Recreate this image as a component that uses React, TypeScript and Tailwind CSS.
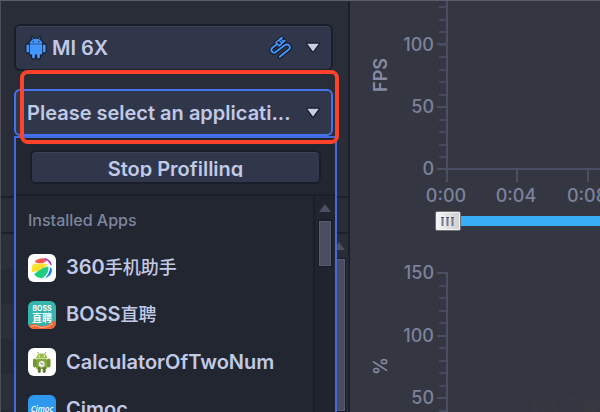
import React from "react"

type AppItem = {
  id: string
  label: React.ReactNode
  icon: React.ReactNode
}

const installedApps: AppItem[] = [
  {
    id: "360",
    label: <>360<span className="text-lg leading-6 font-medium">手机助手</span></>,
    icon: (
      <svg width="28" height="28" viewBox="0 0 28 28" aria-hidden="true">
        <rect width="28" height="28" rx="6" fill="#ffffff" />
        <path d="M6.500 8C8.500 5 12 4 15.500 4.300 18 4.600 18.800 6 18 7.500 15 10 10 9.500 6.500 8Z" fill="#fb5a50" />
        <path d="M16.500 3.900C20.500 4.600 23.300 7.400 24 11.500L22.300 10.800C21 8 19 6.200 17 5.600Z" fill="#a928d8" />
        <path d="M4 18C3 15 3.800 11.500 5.500 9.700 10 10 16 8.500 19.500 10.300 17 14.500 10 18.300 4 18Z" fill="#ffe231" />
        <path d="M6.200 20.200C9.500 17.500 14.500 13.300 20.300 12.500 21.500 17 17.500 23.600 13.500 24.200 10 24 7.500 22.500 6.200 20.200Z" fill="#1ece7e" />
        <path d="M22 13.500C24.800 14 24.300 18 22.500 20.600 20.800 22.900 18.700 24 16.800 24.400 19.800 21.500 21.800 18 22 13.500Z" fill="#1a82f5" />
      </svg>
    ),
  },
  {
    id: "boss",
    label: <>BOSS<span className="text-lg leading-6 font-medium">直聘</span></>,
    icon: (
      <svg width="28" height="28" viewBox="0 0 28 28" aria-hidden="true">
        <rect width="28" height="28" rx="6" fill="#35b5ad" />
        <path d="M1 24.500C5 22 8 23 11 24.500 16 26 22 24 25 20.500L28 19.500V22A6 6 0 0 1 22 28H6C3.500 28 2 26.500 1 24.500Z" fill="#f26435" />
        <path d="M3 25.500 8 24.500 13 26.500 20 25.500 25 22.500" stroke="#ffc2a0" strokeWidth="0.8" fill="none" />
        <text x="14" y="10" textAnchor="middle" fontFamily="Inter, sans-serif" fontWeight="700" fontSize="7" fill="#ffffff">BOSS</text>
        <text x="14" y="21" textAnchor="middle" fontFamily="'Noto Sans CJK SC', sans-serif" fontWeight="700" fontSize="10" fill="#ffffff">直聘</text>
      </svg>
    ),
  },
  {
    id: "calculator",
    label: "CalculatorOfTwoNum",
    icon: (
      <svg width="28" height="28" viewBox="0 0 28 28" aria-hidden="true">
        <rect width="28" height="28" rx="6" fill="#ffffff" />
        <path d="M9.500 4 11 6.500M18 4 16.500 6.500" stroke="#87a83d" strokeWidth="0.9" />
        <path d="M8 10.500C8.200 3.700 19.200 3.700 19.400 10.500Z" fill="#99bd49" />
        <rect x="8" y="11" width="11.400" height="10" rx="1.500" fill="#84a83b" />
        <rect x="5" y="10.500" width="3.500" height="9" rx="1.700" fill="#739532" />
        <rect x="19" y="10.500" width="3.500" height="9" rx="1.700" fill="#739532" />
        <rect x="9.800" y="19" width="3" height="6" rx="1.400" fill="#5e7a2b" />
        <rect x="14.700" y="19" width="3" height="6" rx="1.400" fill="#5e7a2b" />
        <circle cx="11.200" cy="8.300" r="0.700" fill="#ffffff" />
        <circle cx="16.300" cy="8.300" r="0.700" fill="#ffffff" />
        <circle cx="13.700" cy="16" r="3.500" fill="#f3f6e8" stroke="#789642" strokeWidth="0.7" />
        <path d="M12.500 14.500 13.700 16H15.500" stroke="#56702a" strokeWidth="0.8" fill="none" />
      </svg>
    ),
  },
  {
    id: "cimoc",
    label: "Cimoc",
    icon: (
      <svg width="28" height="28" viewBox="0 0 28 28" aria-hidden="true">
        <rect width="28" height="28" rx="6" fill="#2e98ee" />
        <text x="14" y="17" textAnchor="middle" fontFamily="'Open Sans', sans-serif" fontStyle="italic" fontSize="8" fill="#ffffff">Cimoc</text>
      </svg>
    ),
  },
]

const minorTicks = (count: number, top: number) =>
  Array.from({ length: count }, (_, i) => Math.round(top + i * 12.5))

function CaretDown() {
  return (
    <svg className="pointer-events-none absolute right-3 top-1/2 -translate-y-1/2" width="16" height="12" viewBox="0 0 16 12" aria-hidden="true">
      <path d="M2.200 1.800H13.800L8 9.500Z" fill="#c5cee9" stroke="#171b27" strokeWidth="2.400" strokeLinejoin="round" paintOrder="stroke" />
    </svg>
  )
}

function AndroidIcon() {
  const body =
    "M5.200 .8 6.900 3.500C4.200 4.700 3.700 6.500 3.700 7.700H16.300C16.300 6.500 15.800 4.700 13.100 3.500L14.800 .8 14.200 .5 12.400 3.200C11 2.700 9 2.700 7.600 3.200L5.800 .5Z" +
    "M3.700 8.200H16.300V17.300Q16.300 18.500 15.100 18.500H13.900V21.300Q13.700 22.600 12.500 22.600 11.300 22.600 11.100 21.300V18.500H8.900V21.300Q8.700 22.600 7.500 22.600 6.300 22.600 6.100 21.300V18.500H4.900Q3.700 18.500 3.700 17.300Z" +
    "M.4 9.700A1.300 1.300 0 0 1 3 9.700V15.200A1.300 1.300 0 0 1 .4 15.200ZM17 9.700A1.300 1.300 0 0 1 19.600 9.700V15.200A1.300 1.300 0 0 1 17 15.200Z"
  return (
    <svg className="pointer-events-none absolute left-3 top-1/2 -translate-y-1/2 overflow-visible" width="20" height="24" viewBox="0 0 20 24" aria-hidden="true">
      <path d={body} fill="#151a28" stroke="#151a28" strokeWidth="2.200" strokeLinejoin="round" />
      <path d={body} fill="#4496fb" />
      <circle cx="7.200" cy="5.700" r="0.600" fill="#151a28" />
      <circle cx="12.800" cy="5.700" r="0.600" fill="#151a28" />
    </svg>
  )
}

function CableIcon() {
  const cable = "M8 8.300 3.600 11.500C.6 14 3.600 18.300 6.800 16L15.600 9.300C19.200 6.800 22.800 11 19.800 13.600L10.800 20.800"
  return (
    <svg className="pointer-events-none absolute right-10 top-1/2 -translate-y-1/2" width="24" height="24" viewBox="0 0 24 24" fill="none" strokeLinecap="round" strokeLinejoin="round" aria-hidden="true">
      <path d={cable} stroke="#151a28" strokeWidth="4.200" />
      <path d="M6.500 6.300 12.600 1.300 16.400 4.600 11 10.200Z" fill="#151a28" stroke="#151a28" strokeWidth="2.400" />
      <path d={cable} stroke="#4496fb" strokeWidth="1.900" />
      <path d="M6.800 6.500 9.800 4 13 7.300 10.200 9.800Z" stroke="#4496fb" strokeWidth="1.600" />
      <path d="M11 3.300 12.800 1.900M14 6 15.700 4.600" stroke="#4496fb" strokeWidth="2" />
      <path d="M12.200 3.400 14 5.200" stroke="#4496fb" strokeWidth="1.200" />
    </svg>
  )
}

function ArrowUp() {
  return (
    <svg width="12" height="8" viewBox="0 0 12 8" aria-hidden="true">
      <path d="M6 0 12 8H0Z" fill="#4b4f63" />
    </svg>
  )
}

function AppMenu() {
  return (
    <div className="absolute -right-1 left-0 top-full z-10 flex h-[300px] flex-col border-2 border-[#406bdd] bg-[#222630]">
      <div className="h-[58px] shrink-0 border-b-2 border-[#1a1e29] px-3.5 pt-3">
        <button
          type="button"
          className="flex h-[34px] w-full items-center justify-center rounded-md border-2 border-[#1a1e2a] bg-[#31374a] shadow-[inset_0_1px_0_#3d4356]"
        >
          <span className="h-5 overflow-hidden text-xl leading-6 font-semibold text-[#c0c9e6]">Stop Profilling</span>
        </button>
      </div>
      <div className="flex min-h-0 flex-1">
        <div className="min-w-0 flex-1 overflow-hidden pl-3">
          <h2 className="flex h-12 items-center text-base text-[#7e859e]">Installed Apps</h2>
          <ul>
            {installedApps.map((app) => (
              <li key={app.id}>
                <button type="button" className="flex h-[47px] w-full items-center gap-2.5 text-left text-xl leading-6 font-semibold text-[#c0c9e6]">
                  {app.icon}
                  <span>{app.label}</span>
                </button>
              </li>
            ))}
          </ul>
        </div>
        <div className="flex w-[22px] flex-col items-center gap-2 border-l-2 border-[#1a1e29] bg-[#20242e] pt-2">
          <ArrowUp />
          <div className="h-[47px] w-3.5 border border-[#171b26] bg-[#4a4d61] shadow-[inset_0_0_0_1px_#5a5d70]" />
        </div>
      </div>
    </div>
  )
}

function Sidebar() {
  return (
    <aside className="relative flex w-[350px] shrink-0 flex-col border-l border-r-2 border-l-[#4b4e58] border-r-[#1c202b] bg-[#292d37]">
      <div className="flex h-[195px] shrink-0 flex-col gap-[18px] pl-[13px] pr-[15px] pt-[23px]">
        <div className="relative">
          <AndroidIcon />
          <select
            aria-label="Device"
            className="h-[47px] w-full appearance-none rounded-md border-2 border-[#1a1e2a] bg-[#31374a] pl-9 text-xl font-semibold text-[#c0c9e6] shadow-[inset_0_1px_0_#3d4356]"
          >
            <option>MI 6X</option>
          </select>
          <CableIcon />
          <CaretDown />
        </div>
        <div className="relative">
          <select
            aria-label="Application"
            className="h-[47px] w-full appearance-none rounded-md border-2 border-[#4472ee] bg-[#31374a] pl-[11px] text-xl font-semibold text-[#c0c9e6]"
          >
            <option>Please select an applicati...</option>
          </select>
          <CaretDown />
          <AppMenu />
          {/* Highlight around the application picker */}
          <div className="pointer-events-none absolute -bottom-2 -right-1.5 -top-[19px] left-1.5 z-20 rounded-lg border-4 border-[#ff432b]" />
        </div>
      </div>

      {/* Table that the open menu covers */}
      <div className="flex min-h-0 flex-1 flex-col overflow-hidden">
        <div className="h-[38px] shrink-0 border-y-2 border-[#1c202b]" />
        <div className="flex min-h-0 flex-1">
          <div className="flex-1">
            <div className="h-[35px] bg-[#2b2f3a]" />
            <div className="h-[35px] bg-[#272a35]" />
            <div className="h-[35px] bg-[#2b2f3a]" />
            <div className="h-[35px] bg-[#272a35]" />
            <div className="h-[35px] bg-[#2b2f3a]" />
            <div className="h-[35px] bg-[#272a35]" />
          </div>
          <div className="flex w-[18px] flex-col items-center gap-2 pt-2">
            <ArrowUp />
            <div className="w-3.5 flex-1 border border-[#171b26] bg-[#4a4d61] shadow-[inset_0_0_0_1px_#5a5d70]" />
          </div>
        </div>
      </div>
    </aside>
  )
}

function FpsChart() {
  return (
    <svg className="block h-[208px] w-full" role="img" aria-label="FPS over time">
      <g stroke="#4b4e63" strokeWidth="2">
        <line x1="97" y1="0" x2="97" y2="181" />
        <line x1="87" y1="168" x2="100%" y2="168" />
        {minorTicks(13, 6).map((y) => (
          <line key={y} x1="89" y1={y} x2="96" y2={y} strokeWidth="1.500" />
        ))}
        <line x1="87" y1="43" x2="96" y2="43" />
        <line x1="87" y1="106" x2="96" y2="106" />
        <line x1="167" y1="168" x2="167" y2="181" />
        <line x1="238" y1="168" x2="238" y2="181" />
      </g>
      <g fill="#7c829b" fontSize="18" textAnchor="end">
        <text x="84" y="50">100</text>
        <text x="84" y="112">50</text>
        <text x="84" y="174">0</text>
      </g>
      <g fill="#7c829b" fontSize="18" textAnchor="middle">
        <text x="96" y="201">0:00</text>
        <text x="166" y="201">0:04</text>
        <text x="237" y="201">0:08</text>
      </g>
      <text transform="translate(37 74) rotate(-90)" textAnchor="middle" fontSize="18" fontWeight="600" fill="#858ba4">FPS</text>
    </svg>
  )
}

function PercentChart() {
  return (
    <svg className="block min-h-0 w-full flex-1" role="img" aria-label="Usage in percent">
      <g stroke="#4b4e63" strokeWidth="2">
        <line x1="97" y1="39" x2="97" y2="100%" />
        {minorTicks(12, 40).map((y) => (
          <line key={y} x1="89" y1={y} x2="96" y2={y} strokeWidth="1.500" />
        ))}
        <line x1="87" y1="40" x2="96" y2="40" />
        <line x1="87" y1="103" x2="96" y2="103" />
        <line x1="87" y1="165" x2="96" y2="165" />
      </g>
      <g fill="#7c829b" fontSize="18" textAnchor="end">
        <text x="84" y="46">150</text>
        <text x="84" y="109">100</text>
        <text x="84" y="171">50</text>
      </g>
      <text transform="translate(37 133) rotate(-90)" textAnchor="middle" fontSize="18" fill="#858ba4">%</text>
    </svg>
  )
}

function Charts() {
  return (
    <main className="relative flex min-w-0 flex-1 flex-col overflow-hidden bg-[#343741]">
      <FpsChart />
      <div className="relative h-6 shrink-0 pl-[85px] pt-0.5">
        <input
          type="range"
          aria-label="Timeline"
          defaultValue={0}
          className="block h-5 w-full appearance-none bg-transparent [&::-webkit-slider-runnable-track]:h-2.5 [&::-webkit-slider-runnable-track]:bg-[#3aaef5] [&::-webkit-slider-thumb]:-mt-[5px] [&::-webkit-slider-thumb]:h-5 [&::-webkit-slider-thumb]:w-[26px] [&::-webkit-slider-thumb]:appearance-none [&::-webkit-slider-thumb]:rounded-xs [&::-webkit-slider-thumb]:border [&::-webkit-slider-thumb]:border-[#707079] [&::-webkit-slider-thumb]:bg-linear-to-r [&::-webkit-slider-thumb]:from-[#f6f6f6] [&::-webkit-slider-thumb]:to-[#cfcfcf] [&::-webkit-slider-thumb]:shadow-[inset_0_0_0_1px_#f2f2f2]"
        />
        <svg className="pointer-events-none absolute left-[91px] top-2" width="13" height="9" viewBox="0 0 13 9" aria-hidden="true">
          <path d="M1.500 0V9M6.500 0V9M11.500 0V9" stroke="#737a91" strokeWidth="2" />
          <path d="M0 .5H3M5 .5H8M10 .5H13" stroke="#4b5269" />
        </svg>
      </div>
      <PercentChart />
      <p className="pointer-events-none absolute -bottom-1.5 right-0 text-xl leading-6 text-[#37393f]">KK下载</p>
    </main>
  )
}

export default function App() {
  return (
    <div className="flex h-screen overflow-hidden border-t border-[#5b5e69] bg-[#292d37] font-['Inter','Noto_Sans_CJK_SC',sans-serif] font-medium">
      <Sidebar />
      <Charts />
    </div>
  )
}
